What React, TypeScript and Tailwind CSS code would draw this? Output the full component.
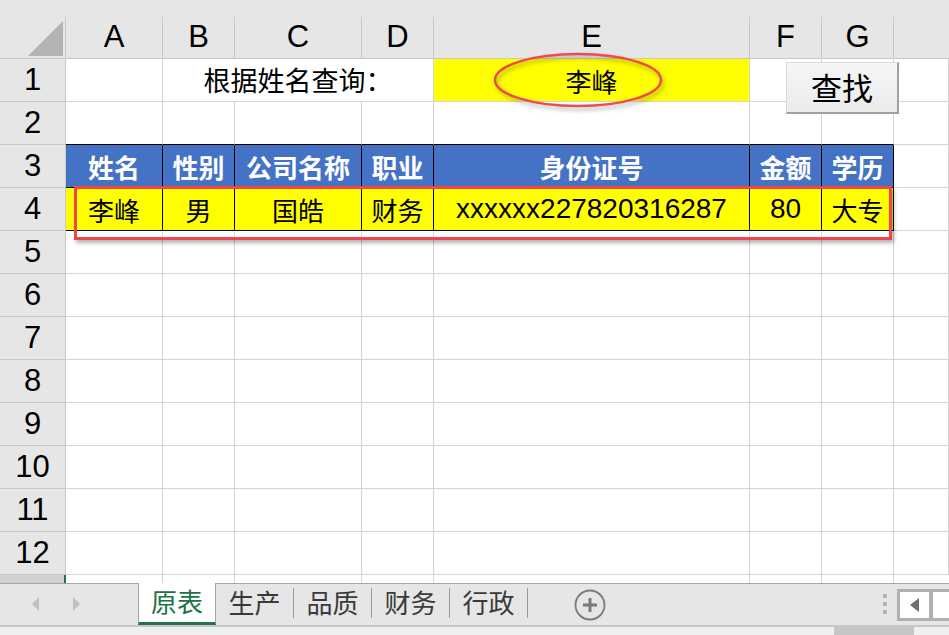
import type { ReactNode } from 'react';

const cjk = { fontFamily: '"Noto Sans CJK SC", "Liberation Sans", sans-serif' };
const latin = { fontFamily: '"Liberation Sans", "Noto Sans CJK SC", sans-serif' };

// column widths of A..G, H takes the rest
const colW = ['w-[97px]', 'w-[72px]', 'w-[127px]', 'w-[72px]', 'w-[316px]', 'w-[72px]', 'w-[72px]'];
const letters = ['A', 'B', 'C', 'D', 'E', 'F', 'G'];

function RowHead({ num }: { num: number }) {
  return (
    <div
      className="w-[66px] shrink-0 border-r border-b border-[#c8c8c8] bg-[#e6e6e6] flex items-center justify-center text-[31px] text-black"
      style={latin}
    >
      {num}
    </div>
  );
}

function Cell({ i, children, className = 'border-[#d4d4d4]' }: { i: number; children?: ReactNode; className?: string }) {
  return (
    <div className={`${i < 7 ? colW[i] : 'flex-1'} shrink-0 border-r border-b flex items-center justify-center ${className}`}>
      {children}
    </div>
  );
}

function EmptyRow({ num }: { num: number }) {
  return (
    <div className="flex h-[43px] shrink-0">
      <RowHead num={num} />
      {[0, 1, 2, 3, 4, 5, 6, 7].map((i) => (
        <Cell key={i} i={i} />
      ))}
    </div>
  );
}

const headers = ['姓名', '性别', '公司名称', '职业', '身份证号', '金额', '学历'];
const record = ['李峰', '男', '国皓', '财务', 'xxxxxx227820316287', '80', '大专'];
const sheets = ['生产', '品质', '财务', '行政'];

export default function App() {
  return (
    <div className="w-[949px] h-[635px] overflow-hidden bg-white flex flex-col select-none">
      <div className="relative flex-1 flex flex-col overflow-hidden">
        {/* top strip */}
        <div className="h-[17px] shrink-0 bg-[#e6e6e6]" />

        {/* column headers */}
        <div className="flex h-[42px] shrink-0 bg-[#e6e6e6]">
          <div className="w-[66px] shrink-0 border-r border-b border-[#c8c8c8] relative">
            <svg width="66" height="42" className="absolute inset-0">
              <polygon points="28,39 63,39 63,4" fill="#b4b4b4" />
            </svg>
          </div>
          {letters.map((l, i) => (
            <div
              key={l}
              className={`${colW[i]} shrink-0 border-r border-b border-[#c8c8c8] flex items-center justify-center text-[31px] text-black`}
              style={latin}
            >
              {l}
            </div>
          ))}
          <div className="flex-1 border-b border-[#c8c8c8]" />
        </div>

        {/* row 1 */}
        <div className="flex h-[43px] shrink-0">
          <RowHead num={1} />
          <Cell i={0} />
          <div
            className="w-[271px] shrink-0 border-r border-b border-[#d4d4d4] flex items-center justify-center text-[27px] text-black"
            style={cjk}
          >
            根据姓名查询：
          </div>
          <Cell i={4} className="bg-[#ffff00] border-[#d4d4d4] text-[26px] text-black">
            <span style={cjk}>李峰</span>
          </Cell>
          <Cell i={5} />
          <Cell i={6} />
          <Cell i={7} />
        </div>

        {/* row 2 */}
        <div className="flex h-[43px] shrink-0">
          <RowHead num={2} />
          {[0, 1, 2, 3, 4, 5, 6].map((i) => (
            <Cell key={i} i={i} className="border-r-[#d4d4d4] border-b-black" />
          ))}
          <Cell i={7} />
        </div>

        {/* row 3: table header */}
        <div className="flex h-[43px] shrink-0">
          <RowHead num={3} />
          {headers.map((h, i) => (
            <Cell key={h} i={i} className="border-black bg-[#4472c4] text-white font-bold text-[26px]">
              <span style={cjk}>{h}</span>
            </Cell>
          ))}
          <Cell i={7} />
        </div>

        {/* row 4: result */}
        <div className="flex h-[43px] shrink-0">
          <RowHead num={4} />
          {record.map((v, i) => (
            <Cell key={i} i={i} className="border-black bg-[#ffff00] text-black">
              {i === 4 || i === 5 ? (
                <span className="text-[28px]" style={latin}>
                  {v}
                </span>
              ) : (
                <span className="text-[26px]" style={cjk}>
                  {v}
                </span>
              )}
            </Cell>
          ))}
          <Cell i={7} />
        </div>

        {[5, 6, 7, 8, 9, 10, 11, 12].map((n) => (
          <EmptyRow key={n} num={n} />
        ))}

        {/* partly visible row 13 */}
        <div className="flex flex-1">
          <div className="w-[64px] shrink-0 bg-[#d2d2d2]" />
          <div className="w-[2px] shrink-0 bg-[#217346]" />
          {[0, 1, 2, 3, 4, 5, 6].map((i) => (
            <div key={i} className={`${colW[i]} shrink-0 border-r border-[#d4d4d4]`} />
          ))}
        </div>

        {/* circled search value */}
        <svg
          width="175"
          height="62"
          className="absolute left-[491px] top-[50px] drop-shadow-[2px_3px_2px_rgba(0,0,0,0.3)]"
        >
          <ellipse cx="87" cy="30" rx="83" ry="26" fill="none" stroke="#ef4a50" strokeWidth="2.5" />
        </svg>

        {/* search button */}
        <div
          className="absolute left-[786px] top-[62px] w-[113px] h-[52px] bg-gradient-to-b from-[#f6f6f6] to-[#ebebeb] border border-[#dadada] border-r-2 border-b-2 border-r-[#a0a0a0] border-b-[#a0a0a0] flex items-center justify-center text-[31px] text-black"
          style={cjk}
        >
          查找
        </div>

        {/* highlighted result row */}
        <div className="absolute left-[74px] top-[186px] w-[818px] h-[54px] border-[3px] border-[#f0464b] shadow-[2px_3px_4px_rgba(0,0,0,0.3)]" />
      </div>

      {/* sheet tabs */}
      <div className="h-[42px] shrink-0 flex items-stretch bg-[#e6e6e6] border-t border-[#a6a6a6]">
        <div className="w-[138px] shrink-0 flex items-center">
          <svg width="138" height="41">
            <polygon points="39,13 39,27 32,20" fill="#c0c0c0" />
            <polygon points="73,13 73,27 80,20" fill="#c0c0c0" />
          </svg>
        </div>
        <div
          className="w-[78px] shrink-0 -mt-px bg-white border-x border-[#a6a6a6] border-b-[3px] border-b-[#217346] flex items-center justify-center text-[26px] text-[#217346] pb-[5px]"
          style={cjk}
        >
          原表
        </div>
        {sheets.map((t) => (
          <div key={t} className="w-[78px] shrink-0 flex items-center">
            <div className="flex-1 text-center text-[26px] text-[#3a3a3a] pb-[6px]" style={cjk}>
              {t}
            </div>
            <div className="w-px h-[30px] mb-[4px] bg-[#9a9a9a]" />
          </div>
        ))}
        <div className="w-[46px] shrink-0" />
        <div className="flex items-center">
          <svg width="32" height="32" viewBox="0 0 32 32">
            <circle cx="16" cy="16" r="14.5" fill="none" stroke="#7a7a7a" strokeWidth="1.8" />
            <rect x="9" y="14.5" width="14" height="3" fill="#7a7a7a" />
            <rect x="14.5" y="9" width="3" height="14" fill="#7a7a7a" />
          </svg>
        </div>
        <div className="flex-1" />
        <div className="w-[24px] shrink-0 flex flex-col items-center justify-center gap-[4px] pb-[2px]">
          <div className="w-[4px] h-[4px] bg-[#b4b4b4]" />
          <div className="w-[4px] h-[4px] bg-[#b4b4b4]" />
          <div className="w-[4px] h-[4px] bg-[#b4b4b4]" />
        </div>
        <div className="w-[52px] shrink-0 flex items-center">
          <div className="h-[32px] w-full flex border-y-[3px] border-l-[3px] border-[#b0b0b0] bg-white">
            <div className="w-[29px] flex items-center justify-center">
              <svg width="10" height="14">
                <polygon points="9,0 9,14 0,7" fill="#6f6f6f" />
              </svg>
            </div>
            <div className="w-[4px] bg-[#b0b0b0]" />
            <div className="flex-1" />
          </div>
        </div>
      </div>

      {/* status strip */}
      <div className="h-[10px] shrink-0 bg-[#f0f0f0] border-t-2 border-[#c8c8c8] flex">
        <div className="w-[834px]" />
        <div className="w-[80px] bg-[#c6c6c6]" />
      </div>
    </div>
  );
}
